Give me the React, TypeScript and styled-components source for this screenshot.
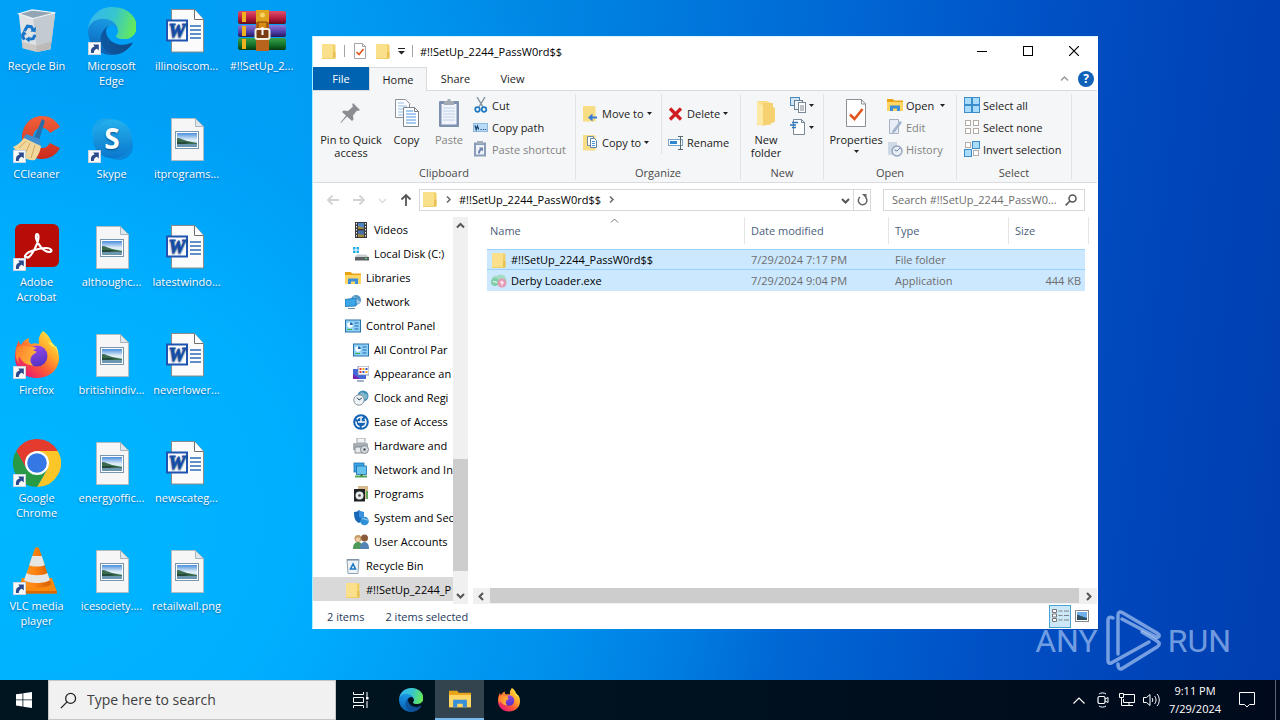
import React from "react";
import styled, { createGlobalStyle } from "styled-components";

const GlobalStyle = createGlobalStyle`
  *, *::before, *::after { box-sizing: border-box; }
  body { margin: 0; background: #0046b4; }
  body, button, input { font-family: "Open Sans", "Noto Sans", sans-serif; font-size: 11px; line-height: 15px; }
  button { border: 0; padding: 0; background: none; color: inherit; cursor: default; }
  svg { display: block; flex: none; }
`;

/* ---------- desktop icons ---------- */

type IconProps = { size?: number };

const ShortcutArrow = () => (
  <g>
    <rect x="0.5" y="35.500" width="12" height="12" fill="#f8fafc" stroke="#c9d6e2" />
    <path d="M3 46c-.6-3.500.8-5.800 3.600-6.400L5.200 37.500h5.600v6L9 41.800C7 42.300 5.700 43.800 5.800 46Z" fill="#2b4a8c" />
  </g>
);

const RecycleBinIcon = ({ size = 48 }: IconProps) => (
  <svg width={size} height={size} viewBox="0 0 50 50" aria-hidden="true">
    <path d="M6 7l15 5 23-6-5 38-14 3-15-4Z" fill="#dfe3e6" />
    <path d="M21 12 44 6l-5 38-14 3Z" fill="#c3cad0" />
    <path d="M6 7 20 3l24 3-23 6Z" fill="#93a5b3" stroke="#f3f7fa" strokeWidth="1.200" />
    <path d="M10 43l-1-7 16 4 15-4-1 8-14 3Z" fill="#b9a79c" opacity=".45" />
    <g fill="none" stroke="#1976c8" strokeWidth="3.200">
      <path d="M12 25l3-5 4 .5 2 3.500" />
      <path d="M23 29l-2 4-5 .5" />
      <path d="M12 34l-2-3 1-3" />
    </g>
    <path d="M18 25.500l5.500.500.500-5.500Z M17 30.500v6.500l-4-3.500Z M8 29.500l3-5 3.500 4Z" fill="#1976c8" />
  </svg>
);

const EdgeArt = () => (
  <>
    <defs>
      <linearGradient id="edgeDeep" x1="0" x2="1" y1="0" y2="0"><stop stopColor="#0c59a4" /><stop offset="1" stopColor="#114a8b" /></linearGradient>
      <linearGradient id="edgeMid" x1="0.500" x2="0.300" y1="0" y2="1"><stop stopColor="#1b9de2" /><stop offset=".45" stopColor="#1383d4" /><stop offset="1" stopColor="#0b5cab" /></linearGradient>
      <linearGradient id="edgeTop" x1="0" x2="1" y1="0.300" y2="0.500"><stop stopColor="#35b8f0" /><stop offset=".5" stopColor="#36c5d0" /><stop offset="1" stopColor="#66eb55" /></linearGradient>
    </defs>
    <path fill="url(#edgeDeep)" d="M231 190.500c-3.400 1.800-6.900 3.400-10.500 4.700-11.500 4.300-23.600 6.500-35.900 6.500-47.300 0-88.500-32.500-88.500-74.300.1-11.400 6.400-21.900 16.400-27.300-42.800 1.800-53.800 46.400-53.800 72.500 0 74 68.100 81.400 82.800 81.400 7.900 0 19.800-2.300 27-4.600l1.300-.4c27.600-9.500 51-28.100 66.600-52.800 1.200-1.900.6-4.300-1.200-5.500-1.300-.8-2.900-.9-4.200-.2z" />
    <path fill="url(#edgeMid)" d="M105.700 241.400c-8.900-5.500-16.600-12.800-22.700-21.300-26.300-36-18.400-86.500 17.600-112.800 3.800-2.700 7.700-5.200 11.900-7.200 3.100-1.500 8.400-4.100 15.500-4 10.100.1 19.600 4.900 25.700 13 4 5.400 6.300 11.900 6.400 18.700 0-.2 24.500-79.600-80-79.600-43.900 0-80 41.700-80 78.200-.2 19.300 4 38.500 12.100 56 27.600 58.800 94.800 87.600 156.400 67.100-21.100 6.600-44.100 3.700-62.900-8.100z" />
    <path fill="url(#edgeTop)" d="M152.300 148.900c-.9 1-3.300 2.500-3.300 5.800 0 2.700 1.700 5.300 4.800 7.500 14.900 10.300 43 9 43.100 9 11 0 21.900-3 31.400-8.600 19.600-11.400 31.600-32.400 31.600-55 .3-23.300-8.300-38.800-11.800-45.700C226.100 18.800 179.100 0 128 0 56.100 0 1 56.200 0 128c.5-36.500 36.800-66 80-66 3.500 0 23.500.3 42 10.100 16.300 8.600 24.900 18.900 30.800 29.200 6.200 10.700 7.300 24.100 7.300 29.500 0 5.300-2.700 13.300-7.800 18.100z" />
  </>
);

const EdgeIcon = () => (
  <svg width="48" height="48" viewBox="0 0 48 48" aria-hidden="true">
    <g transform="scale(.1875)"><EdgeArt /></g>
    <ShortcutArrow />
  </svg>
);

const WordIcon = () => (
  <svg width="48" height="48" viewBox="0 0 48 48" aria-hidden="true">
    <path d="M8.500 2.500h23l9 10v32.500h-32Z" fill="#fbfbfb" stroke="#8a8a8a" />
    <path d="M31.500 2.500v10h9" fill="#fff" stroke="#6f6f6f" />
    <path d="M27 19h11M27 23h11M27 27h11M27 31h11" stroke="#2b6cb8" strokeWidth="1.300" />
    <rect x="4" y="13.500" width="20" height="20" fill="#fff" stroke="#1f55b0" strokeWidth="2" />
    <text x="14" y="30" textAnchor="middle" fontFamily="Liberation Serif, serif" fontSize="19" fontWeight="700" fontStyle="italic" fill="#1a52ae" stroke="#1a52ae" strokeWidth=".8">W</text>
  </svg>
);

const PhotoIcon = () => (
  <svg width="48" height="48" viewBox="0 0 48 48" aria-hidden="true">
    <defs>
      <linearGradient id="photoSky" x2="0" y2="1"><stop stopColor="#4b8fdd" /><stop offset=".5" stopColor="#e4f1f8" /><stop offset="1" stopColor="#9fc3d8" /></linearGradient>
    </defs>
    <path d="M8.500 3.500h24l8 8v34h-32Z" fill="#f6f6f6" stroke="#b3bcc2" />
    <path d="M32.500 3.500v8h8Z" fill="#dde8ee" stroke="#a9b4bb" />
    <rect x="12.500" y="16.500" width="23" height="17" fill="#fff" stroke="#7896b0" />
    <rect x="14" y="18" width="20" height="14" fill="url(#photoSky)" />
    <path d="M14 23c4 0 6 2 10 3l10 2v2H14Z" fill="#3b6b4e" />
    <path d="M14 29h20v3H14Z" fill="#6d96b0" />
    <path d="M14 27h14l-6 2h-8Z" fill="#24493b" />
  </svg>
);

const ArchiveIcon = () => (
  <svg width="48" height="48" viewBox="0 0 48 48" aria-hidden="true">
    <defs>
      <linearGradient id="bookRed" x2="0" y2="1"><stop stopColor="#e0506a" /><stop offset=".6" stopColor="#b3193b" /><stop offset="1" stopColor="#5d0b1e" /></linearGradient>
      <linearGradient id="bookBlue" x2="0" y2="1"><stop stopColor="#8a78d8" /><stop offset=".6" stopColor="#4d3ca6" /><stop offset="1" stopColor="#221a55" /></linearGradient>
      <linearGradient id="bookGreen" x2="0" y2="1"><stop stopColor="#3ca04a" /><stop offset=".6" stopColor="#12702a" /><stop offset="1" stopColor="#06380f" /></linearGradient>
    </defs>
    <rect y="4" width="48" height="13" rx="2" fill="url(#bookRed)" />
    <rect y="18" width="48" height="12" rx="2" fill="url(#bookBlue)" />
    <rect y="31" width="48" height="12" rx="2" fill="url(#bookGreen)" />
    <path d="M4 5h4v10H4ZM4 19h4v10H4ZM4 32h4v10H4Z" fill="#efb21e" />
    <rect x="18" y="3" width="13" height="41" fill="#b8641c" />
    <path d="M18 3h13v12H18Z" fill="#e2a31d" />
    <circle cx="24.500" cy="8" r="2.500" fill="#f6d265" />
    <path d="M20 15h9v10h-9Z" fill="#d88a12" stroke="#7c430a" />
    <rect x="17.500" y="22" width="14" height="10" rx="2" fill="#7a3a12" stroke="#f4efe0" strokeWidth="2" />
    <path d="M24.500 20v8" stroke="#fff" strokeWidth="2" />
  </svg>
);

const CCleanerIcon = () => (
  <svg width="48" height="48" viewBox="0 0 48 48" aria-hidden="true">
    <defs><linearGradient id="ccRed" x2="0" y2="1"><stop stopColor="#f2603a" /><stop offset="1" stopColor="#c92a1e" /></linearGradient></defs>
    <path d="M47 12C42 4 36 1 29 1 17 1 9 11 9 23s8 21 20 21c8 0 14-4 18-11l-10-5c-2 3-4 5-8 5-6 0-9-4-9-10s3-10 9-10c4 0 6 2 8 5Z" fill="url(#ccRed)" />
    <path d="M29 4l3 2-6 19-5-2Z" fill="#2a6da8" />
    <path d="M13 19l14 5 1 8-18-8Z" fill="#3e8ed0" />
    <path d="M11 23 28 31c-1 7-4 11-6 14-7 1-14-2-22-13 5-2 8-5 11-9Z" fill="#f1d79c" />
    <path d="M13 26 6 33M17 28l-5 11M22 30l-4 13" stroke="#d1a85e" />
    <ShortcutArrow />
  </svg>
);

const SkypeIcon = () => (
  <svg width="48" height="48" viewBox="0 0 48 48" aria-hidden="true">
    <defs><linearGradient id="skypeBlue" x2="0" y2="1"><stop stopColor="#25b1ee" /><stop offset="1" stopColor="#0a76cc" /></linearGradient></defs>
    <circle cx="18" cy="17" r="14" fill="#1ba4ea" />
    <circle cx="31" cy="31" r="14" fill="#0c86d8" />
    <circle cx="24.500" cy="24" r="19.500" fill="url(#skypeBlue)" />
    <text x="24" y="34" textAnchor="middle" fontFamily="Open Sans, sans-serif" fontSize="28" fontWeight="700" fill="#fff">S</text>
    <ShortcutArrow />
  </svg>
);

const AcrobatIcon = () => (
  <svg width="48" height="48" viewBox="0 0 48 48" aria-hidden="true">
    <rect x="2" y="1" width="44" height="43" rx="6" fill="#b60d06" />
    <path d="M14 34c-3 1-3-2 2-5 5-2 11-4 17-4 6 0 7 4 3 4-5 0-12-8-13-14-.5-5 2.500-5 2.500-1 0 6-6 17-9.500 20-1 .7-1.500 1-2 0Z" fill="none" stroke="#fff" strokeWidth="2.200" strokeLinejoin="round" />
    <ShortcutArrow />
  </svg>
);

const FirefoxArt = () => (
  <>
    <defs>
      <linearGradient id="foxBody" x1=".9" x2=".2" y1=".1" y2=".9"><stop stopColor="#ffe640" /><stop offset=".35" stopColor="#ffa62c" /><stop offset=".65" stopColor="#ff5a36" /><stop offset="1" stopColor="#e81d6f" /></linearGradient>
      <linearGradient id="foxGlobe" x2="0.300" y2="1"><stop stopColor="#a04be8" /><stop offset="1" stopColor="#5a35c8" /></linearGradient>
      <linearGradient id="foxHead" x2="1" y2=".4"><stop stopColor="#ff7a2a" /><stop offset="1" stopColor="#ffb43a" /></linearGradient>
    </defs>
    <path d="M30 0c6 4 8 9 9 12 5 4 7 9 7 15 0 11-9 20-22 20S2 38 2 26c0-6 1-11 4-17 0 3 1 4 2 5 2-4 5-6 8-7-1 3 0 5 2 6 3-1 5-1 8 0-1-6 1-10 4-13Z" fill="url(#foxBody)" />
    <path d="M39 12c4 4 6 9 6 14 0-5 0-7-2-11-2 3-5 0-8-4Z" fill="#fff15a" />
    <circle cx="24" cy="25" r="10.500" fill="url(#foxGlobe)" />
    <path d="M4 16c4-2 8-2 13 0 3-.5 5 0 6.500 1.500-2 .5-3 1.300-3 2.200l3 .8c0 2-4 2.500-5 5-2 3-1 7 2 9-7 0-12-4-14-9-2 2-1 6 0 8-4-5-5-11-2.500-17.500Z" fill="url(#foxHead)" />
  </>
);

const FirefoxIcon = () => (
  <svg width="48" height="48" viewBox="0 0 48 48" aria-hidden="true"><FirefoxArt /><ShortcutArrow /></svg>
);

const ChromeIcon = () => (
  <svg width="48" height="48" viewBox="0 0 48 48" aria-hidden="true">
    <path d="M3.200 12A24 24 0 0 1 44.800 12H24L13.600 30Z" fill="#e33b2e" />
    <path d="M44.800 12A24 24 0 0 1 24 48L34.400 30 24 12Z" fill="#fcc629" />
    <path d="M3.200 12A24 24 0 0 0 24 48L34.400 30H13.600Z" fill="#289a45" />
    <circle cx="24" cy="24" r="12" fill="#fff" />
    <circle cx="24" cy="24" r="9.800" fill="#3578e5" />
    <ShortcutArrow />
  </svg>
);

const VlcIcon = () => (
  <svg width="48" height="48" viewBox="0 0 48 48" aria-hidden="true">
    <defs><linearGradient id="cone" x2="1"><stop stopColor="#ff9a2a" /><stop offset=".4" stopColor="#ff8412" /><stop offset="1" stopColor="#d65f00" /></linearGradient></defs>
    <path d="M9 31h30l5 14-1 1.500H5L4 45Z" fill="#f98a10" />
    <path d="M4 44h40v2.500H4Z" fill="#d86700" />
    <path d="M22 1c1-1 3-1 4 0l12 36c-3 5-25 5-28 0Z" fill="url(#cone)" />
    <path d="M19.200 9h9.600l3 9c-3 2-12.600 2-15.600 0ZM13.500 26c5 3 16 3 21 0l2.400 7c-4 4-21.800 4-25.800 0Z" fill="#e6e6e4" />
    <ShortcutArrow />
  </svg>
);

/* ---------- small icons ---------- */

const FolderIcon = ({ size = 16 }: IconProps) => (
  <svg width={size} height={size} viewBox="0 0 16 16" aria-hidden="true">
    <path d="M1 1h11l2.500 1v13L12 16H1Z" fill="#f3cf68" />
    <path d="M1 1h11v14H1Z" fill="#fbe08c" />
    <path d="M12 9h2.500v6.500H12Z" fill="#e9c052" />
  </svg>
);

const NewFolderIcon = () => (
  <svg width="24" height="32" viewBox="0 0 24 32" aria-hidden="true">
    <path d="M3 4h10l4 2v22H3Z" fill="#f9dc86" />
    <path d="M9 6h10v4l2 1v14l-12 4Z" fill="#f5d171" />
    <path d="M3 4l6 5v20l-6-2Z" fill="#fde9a4" />
  </svg>
);

const ExplorerIcon = ({ size = 16 }: IconProps) => (
  <svg width={size} height={size} viewBox="0 0 16 16" aria-hidden="true">
    <path d="M0 2h6l1 1.500h9V14H0Z" fill="#e8a317" />
    <path d="M0 5h16v9H0Z" fill="#ffd664" />
    <path d="M3 14V8.500h10V14h-3v-2.500H6V14Z" fill="#3b8ed8" />
  </svg>
);

const CheckPageIcon = ({ size = 16 }: IconProps) => (
  <svg width={size} height={size} viewBox="0 0 16 16" aria-hidden="true">
    <path d="M2.500.5h8l3 3v12h-11Z" fill="#fff" stroke="#8b8f94" strokeWidth=".8" />
    <path d="M10.500.5v3h3" fill="none" stroke="#8b8f94" strokeWidth=".8" />
    <path d="M4.500 9l2.500 2.500L11.500 6" fill="none" stroke="#e2571e" strokeWidth="1.600" />
  </svg>
);

const PropertiesIcon = () => (
  <svg width="24" height="32" viewBox="0 0 24 32" aria-hidden="true">
    <path d="M2.500 2.500h15l4 4.500v22.500h-19Z" fill="#fff" stroke="#8b9096" />
    <path d="M17.500 2.500V7h4" fill="none" stroke="#8b9096" />
    <path d="M6 17.500l4.500 4.500 8-10" fill="none" stroke="#e2571e" strokeWidth="2.600" />
  </svg>
);

const PinIcon = () => (
  <svg width="24" height="32" viewBox="0 0 24 32" aria-hidden="true">
    <path d="M14 6l7 7-2 1-1-.5-4 5 .5 4L13 24l-5-4.500L2 26l-.5-.5L7 18.500 3 15l1.500-1.500 4.500.5 5-4.500-.8-1.500Z" fill="#8a8d91" />
  </svg>
);

const CopyIcon = () => (
  <svg width="26" height="32" viewBox="0 0 26 32" aria-hidden="true">
    <path d="M1.500 2.500h10l4 4v14h-14Z" fill="#fff" stroke="#8a9198" />
    <path d="M4 9h9M4 12h9M4 15h9M4 18h6M4 6h6" stroke="#8dbbe6" />
    <path d="M9.500 10.500h11l4 4v15h-15Z" fill="#fff" stroke="#7d848b" />
    <path d="M20.500 10.500v4h4" fill="none" stroke="#7d848b" />
    <path d="M12 14h7M12 17h10M12 20h10M12 23h10M12 26h10" stroke="#4b97df" />
  </svg>
);

const PasteIcon = () => (
  <svg width="24" height="32" viewBox="0 0 24 32" aria-hidden="true">
    <rect x="2" y="4" width="20" height="26" rx="1" fill="#7d90ae" />
    <rect x="4.500" y="7" width="15" height="20.500" fill="#f1f5fb" />
    <path d="M6 11h12M6 14h12M6 17h12M6 20h12M6 23h12" stroke="#bfd2ea" />
    <path d="M7 4h3l1-2h2l1 2h3v4H7Z" fill="#a2aab6" />
  </svg>
);

const CutIcon = () => (
  <svg width="16" height="16" viewBox="0 0 16 16" aria-hidden="true">
    <path d="M4 0l6 10M12 0 6 10" stroke="#8593a0" strokeWidth="1.400" />
    <circle cx="4.500" cy="12.500" r="2.300" fill="none" stroke="#1d78c4" strokeWidth="1.700" />
    <circle cx="11" cy="12.500" r="2.300" fill="none" stroke="#1d78c4" strokeWidth="1.700" />
  </svg>
);

const CopyPathIcon = () => (
  <svg width="16" height="16" viewBox="0 0 16 16" aria-hidden="true">
    <rect x=".5" y="4.500" width="14" height="8" fill="#b9dcf8" stroke="#8fb9dc" />
    <path d="M2 6.500l1.200 4L4.500 7l1.200 3.500M7.500 10.500h1.200M10 10.500h1.200M12.300 10.500h1" fill="none" stroke="#17436f" strokeWidth="1.200" />
  </svg>
);

const PasteShortcutIcon = () => (
  <svg width="16" height="16" viewBox="0 0 16 16" aria-hidden="true">
    <rect x="1" y="1.500" width="12" height="14" fill="#8b9cb8" />
    <rect x="3" y="4" width="8" height="9.500" fill="#eef3fa" />
    <rect x="4" y="0" width="6" height="3" fill="#a4adba" />
    <path d="M5 12.500c0-3 1-4 2-4.500L6 6.500h4v4L8.800 9.300C7.500 10 7 11 7 12.500Z" fill="#6f86ac" />
  </svg>
);

const MoveToIcon = () => (
  <svg width="16" height="16" viewBox="0 0 16 16" aria-hidden="true">
    <path d="M0 0h11l1.500 1v14.500H0Z" fill="#f9dd84" />
    <path d="M14 12.500H9.500v3L5 11.500l4.500-4v3H14Z" fill="#3b79d6" />
  </svg>
);

const CopyToIcon = () => (
  <svg width="16" height="16" viewBox="0 0 16 16" aria-hidden="true">
    <path d="M0 0h11l1.500 1v14.500H0Z" fill="#f9dd84" />
    <path d="M4.500 1.500h6v9h-6Z" fill="#fff" stroke="#6c8aa8" />
    <path d="M7.500 3.500h4l2 2v7h-6Z" fill="#fff" stroke="#5b7fa6" />
    <path d="M9 6.500h3M9 8.500h3M9 10.500h3" stroke="#4b97df" />
  </svg>
);

const DeleteIcon = () => (
  <svg width="16" height="16" viewBox="0 0 16 16" aria-hidden="true">
    <path d="M2 2.500l11 11M13 2.500l-11 11" stroke="#cf1d22" strokeWidth="3.200" />
  </svg>
);

const RenameIcon = () => (
  <svg width="16" height="16" viewBox="0 0 16 16" aria-hidden="true">
    <rect x=".5" y="4.500" width="14" height="6" fill="#fff" stroke="#7aa3cc" />
    <rect x="2" y="6" width="7" height="3" fill="#2f87d2" />
    <path d="M10 1.500h5M12.500 1.500v13M10 14.500h5" stroke="#5d6875" fill="none" />
  </svg>
);

const NewItemIcon = () => (
  <svg width="16" height="16" viewBox="0 0 16 16" aria-hidden="true">
    <rect x=".5" y=".5" width="9" height="8" fill="#cfe6f8" stroke="#4f87b5" />
    <rect x="4.500" y="3.500" width="8" height="9" fill="#eef6fc" stroke="#6d7f8e" />
    <rect x="8.500" y="5.500" width="7" height="10" fill="#fff" stroke="#7a8794" />
    <path d="M10 9h4M10 11h4M10 13h4" stroke="#7a8794" />
  </svg>
);

const EasyAccessIcon = () => (
  <svg width="16" height="16" viewBox="0 0 16 16" aria-hidden="true">
    <path d="M3.500.5h8l3 3v12h-11Z" fill="#fff" stroke="#7a8794" />
    <path d="M11.500.5v3h3" fill="none" stroke="#7a8794" />
    <path d="M2 3.500h6M0 6h6M2 8.500h4" stroke="#2b77bd" strokeWidth="1.400" />
  </svg>
);

const EditIcon = () => (
  <svg width="16" height="16" viewBox="0 0 16 16" aria-hidden="true">
    <path d="M2.500.5h9v14h-9Z" fill="#e9eef6" stroke="#a5b2c6" />
    <path d="M13 2l2 1.500-7 9.500-3 2 .5-3.500Z" fill="#a3b3cc" />
  </svg>
);

const HistoryIcon = () => (
  <svg width="16" height="16" viewBox="0 0 16 16" aria-hidden="true">
    <path d="M1 1h9v13H1Z" fill="#d0d9e6" />
    <circle cx="10" cy="10" r="5" fill="#e9eef6" stroke="#93a3bc" strokeWidth="1.400" />
    <path d="M10 10l3-3M7.500 9l2.500 1" fill="none" stroke="#7084a3" />
  </svg>
);

const SelectIcon = ({ filled }: { filled: number[] }) => (
  <svg width="16" height="16" viewBox="0 0 16 16" aria-hidden="true">
    {[0, 1, 2, 3].map((i) => {
      const on = filled.includes(i);
      const x = i % 2 ? 8.5 : 0.5;
      const y = i > 1 ? 8.5 : 0.5;
      return on
        ? <rect key={i} x={x} y={y} width="7" height="7" fill="#a9dbfb" stroke="#3c8dc9" />
        : <rect key={i} x={x + 1} y={y + 1} width="5" height="5" fill="#fff" stroke="#b5aca8" />;
    })}
  </svg>
);

const Caret = () => (
  <svg width="5" height="3" viewBox="0 0 5 3" aria-hidden="true"><path d="M0 0h5L2.500 3Z" fill="#222" /></svg>
);

const Chevron = ({ turn, color = "#555", width = 2 }: { turn: "up" | "down" | "left" | "right"; color?: string; width?: number }) => {
  const paths = { up: "M1 6.500 4.500 3 8 6.500", down: "M1 3l3.500 3.500L8 3", left: "M6 1 2.500 4.500 6 8", right: "M3 1l3.500 3.500L3 8" };
  return <svg width="9" height="9" viewBox="0 0 9 9" aria-hidden="true"><path d={paths[turn]} fill="none" stroke={color} strokeWidth={width} /></svg>;
};

const CrumbChevron = () => (
  <svg width="9" height="9" viewBox="0 0 9 9" aria-hidden="true"><path d="M3 1.500l3 3-3 3" fill="none" stroke="#666" strokeWidth="1.500" /></svg>
);

const ArrowIcon = ({ d, color }: { d: string; color: string }) => (
  <svg width="14" height="14" viewBox="0 0 14 14" aria-hidden="true"><path d={d} fill="none" stroke={color} strokeWidth="1.800" /></svg>
);

const SearchIcon = ({ size = 12, color = "#555", stroke = 1.5 }: { size?: number; color?: string; stroke?: number }) => (
  <svg width={size} height={size} viewBox="0 0 12 12" aria-hidden="true">
    <circle cx="7.500" cy="4.500" r="3.500" fill="none" stroke={color} strokeWidth={stroke} />
    <path d="M5 7 .6 11.400" stroke={color} strokeWidth={stroke} />
  </svg>
);

const treeArt: Record<string, React.ReactNode> = {
  video: <><rect x="2" width="12" height="16" fill="#3b3b3d" /><rect x="5" y="1" width="6" height="6" fill="#4a86c8" /><rect x="5" y="8.500" width="6" height="6.500" fill="#4a6ea8" /><path d="M5 4l6 2v1H5ZM5 12l6 1v2H5Z" fill="#a58a35" /><path d="M3.500 1v14M12.500 1v14" stroke="#eee" strokeDasharray="1.500 1.500" /></>,
  disk: <><path d="M0 1h2.500v2.500H0ZM3.500 1H6v2.500H3.500ZM0 4.500h2.500V7H0ZM3.500 4.500H6V7H3.500Z" fill="#1fb0e6" /><path d="M4 8.500h9l3 2.500H2Z" fill="#c8ced2" /><rect x="2" y="11" width="14" height="3.500" fill="#5b6266" /><rect x="12" y="12" width="2" height="1" fill="#57e06a" /></>,
  network: <><circle cx="11" cy="6" r="5" fill="#4f95c6" /><path d="M8 3c2-1 3 0 4 2s3 1 3 3-3 2-4 1Z" fill="#9fcbe6" /><path d="M0 5.500 11 4v8L0 12.500Z" fill="#3aa6e8" stroke="#1c6fae" strokeWidth=".8" /><path d="M3 14.500h7" stroke="#6c8aa1" /></>,
  control: <><rect x=".5" y="2" width="15" height="12" fill="#8fd0f6" stroke="#2a72aa" /><circle cx="5" cy="7" r="2.800" fill="#fff" /><path d="M5 4.200V7h2.800A2.800 2.800 0 0 0 5 4.200" fill="#1c69b0" /><path d="M9.500 5h4M9.500 8h4M9.500 11h4" stroke="#1c69b0" /><path d="M2 11.500h5" stroke="#3cb25c" /></>,
  appearance: <><rect y="3" width="13" height="10" fill="#4568d8" /><path d="M0 8l7 5H0Z" fill="#7b24b0" /><rect x="5" width="11" height="9" fill="#fff" stroke="#6678a8" strokeWidth=".8" /><path d="M6.500 2h2v2h-2Z M6.500 5h2v2h-2Z" fill="#e03c2e" /><path d="M9.500 2h2v2h-2Z M12.500 5h2v2h-2Z" fill="#f1a81d" /><path d="M12.500 2h2v2h-2Z M9.500 5h2v2h-2Z" fill="#3b55c8" /><path d="M4 15h7" stroke="#8899b5" strokeWidth="1.500" /></>,
  clock: <><circle cx="10" cy="6" r="5.500" fill="#3d8db8" /><path d="M7 3c3-2 4 1 6 1s2 4 0 5-5-1-6-6" fill="#7fb8c8" /><circle cx="6" cy="10" r="5.200" fill="#edf2f5" stroke="#8b979f" /><path d="M6 10 4 7.500M6 10l3-2" stroke="#354b5c" /></>,
  ease: <><circle cx="8" cy="8" r="7.800" fill="#1463b5" /><circle cx="8" cy="8" r="5" fill="none" stroke="#fff" strokeWidth="1.400" strokeDasharray="7 2" /><path d="M8 4v4h4.500M5 8h3" fill="none" stroke="#fff" strokeWidth="1.400" /></>,
  hardware: <><path d="M4 0h8v5H4Z" fill="#f1f3f4" stroke="#8a9298" strokeWidth=".8" /><rect y="5" width="15" height="7" rx="1" fill="#a9b0b5" /><path d="M2 9h7v6H2Z" fill="#e8ebed" stroke="#6f777d" strokeWidth=".8" /><circle cx="11.500" cy="11.500" r="4" fill="#d5dade" stroke="#7e878d" /><circle cx="11.500" cy="11.500" r="1.200" fill="#4c5358" /></>,
  internet: <><rect x="1" y="1" width="10" height="9" fill="#3aa6e8" stroke="#1c6fae" strokeWidth=".8" /><rect x="3.500" y="4" width="10" height="8.500" fill="#67c4ef" stroke="#1c6fae" strokeWidth=".8" /><path d="M2 14.500h12" stroke="#4fa857" strokeWidth="2" /><path d="M8.500 12v2.500" stroke="#41713f" strokeWidth="2" /></>,
  programs: <><rect x="5" width="10" height="13" fill="#d7b98c" /><rect x="1" y="3" width="11" height="12.500" fill="#1f2324" /><circle cx="6.500" cy="9.500" r="4" fill="#e7e9ea" /><circle cx="6.500" cy="9.500" r="1.300" fill="#444" /><path d="M13 5h2v8h-2Z" fill="#63a55c" /></>,
  security: <><path d="M1 2c3 0 4-1 5-2 1 1 2 2 5 2 0 6-1 9-5 11C2 11 1 8 1 2Z" fill="#1a67b6" /><path d="M6 0c1 1 2 2 5 2 0 3 0 5-1 7L6 7Z" fill="#3a93de" /><circle cx="11.500" cy="11" r="4.300" fill="#2d8fd8" /><path d="M9 9c2-1 4 1 6 1" stroke="#a8d8f5" fill="none" /></>,
  users: <><circle cx="5" cy="4.500" r="3.500" fill="#c79a63" /><path d="M0 15c0-5 2-7 5-7s5 2 5 7Z" fill="#4f9a58" /><circle cx="11.500" cy="4" r="3.500" fill="#8b5a38" /><path d="M7 15c0-5 2-7 4.500-7S16 10 16 15Z" fill="#5682b4" /><circle cx="5" cy="5.500" r="2.200" fill="#f0cfa5" /></>,
  bin: <><path d="M2 1.500h12L13 15.500H3Z" fill="#eef3f7" stroke="#91a2af" /><path d="M2 2h12" stroke="#71879a" /><path d="M8 6l-2.500 5h5Z" fill="none" stroke="#1d78c4" strokeWidth="1.600" /></>,
};

const TreeIcon = ({ kind }: { kind: string }) => {
  if (kind === "folder") return <FolderIcon />;
  if (kind === "libraries") return <ExplorerIcon />;
  return <svg width="16" height="16" viewBox="0 0 16 16" aria-hidden="true">{treeArt[kind]}</svg>;
};

const LoaderIcon = () => (
  <svg width="16" height="16" viewBox="0 0 16 16" aria-hidden="true">
    <path d="M1 6c0-3 3-4 5-3 2-2 6-1 8 0l2 5H1Z" fill="#a3dcc2" />
    <circle cx="4" cy="9" r="4" fill="#7fcfab" />
    <circle cx="11" cy="10" r="4.500" fill="#e59ab4" />
    <path d="M2 8.500l4 1M9 9l4 1M11 7.500v5" stroke="#fff" />
  </svg>
);

/* ---------- desktop ---------- */

const Screen = styled.div`
  display: flex;
  flex-direction: column;
  min-height: 100vh;
  background:
    radial-gradient(ellipse 62% 95% at 0% 72%, #00b6ff 0%, #00b0ff 36%, rgba(0, 160, 248, 0.7) 62%, rgba(0, 130, 230, 0) 100%),
    linear-gradient(96deg, #00a2f6 0%, #009cf2 22%, #0084e2 42%, #0068d4 62%, #0050c4 78%, #0044b8 90%, #003eb0 100%);
`;

const Desktop = styled.main`
  position: relative;
  flex: 1;
  min-height: 660px;
`;

const ShortcutGrid = styled.div`
  display: grid;
  grid-auto-flow: column;
  grid-template-rows: repeat(6, 108px);
  grid-auto-columns: 75px;
  justify-content: start;
  margin-left: -1px;
`;

const Shortcut = styled.button`
  display: flex;
  flex-direction: column;
  align-items: center;
  gap: 3px;
  padding-top: 7px;
  color: #fff;
  text-shadow: 0 1px 2px rgba(0, 40, 90, 0.6);
`;

const ShortcutLabel = styled.span`
  max-width: 75px;
  white-space: pre-line;
  text-align: center;
`;

const Watermark = styled.div`
  position: absolute;
  right: 49px;
  bottom: 8px;
  z-index: 3;
  display: flex;
  align-items: center;
  gap: 7px;
  color: rgba(190, 214, 250, 0.62);
  font: 32px/62px Roboto, "Liberation Sans", sans-serif;
  pointer-events: none;
`;

/* ---------- explorer window ---------- */

const Window = styled.section`
  position: absolute;
  inset: 36px 182px 51px 312px;
  z-index: 2;
  display: flex;
  flex-direction: column;
  border: 1px solid #fff;
  border-color: #d8f6ff #fff #fff #a8ecff;
  background: #fff;
  color: #1c1c1c;
  overflow: hidden;
`;

const TitleBar = styled.header`
  display: flex;
  align-items: center;
  height: 30px;
  padding: 0 0 2px 8px;
  flex: none;
`;

const QuickAccess = styled.div`
  display: flex;
  align-items: center;
  gap: 7px;
  margin-right: 7px;
`;

const Divider = styled.span`
  width: 1px;
  height: 12px;
  background: #a5a5a5;
`;

const ColumnRule = styled.span`
  width: 1px;
  height: 60px;
  margin-right: 3px;
  background: #e1e3e5;
`;

const WindowTitle = styled.h1`
  flex: 1;
  margin: 0;
  font-size: 11px;
  font-weight: 400;
  color: #000;
`;

const CaptionButton = styled.button`
  display: grid;
  place-items: center;
  width: 46px;
  height: 28px;
`;

const Tabs = styled.nav`
  display: flex;
  align-items: stretch;
  height: 24px;
  flex: none;
  border-bottom: 1px solid #dadbdc;
`;

const Tab = styled.button<{ $kind?: "file" | "active" }>`
  width: 57px;
  ${(p) => p.$kind === "file" && "width: 56px; background: #0063b1; color: #fff;"}
  ${(p) => p.$kind === "active" && "width: 58px; margin-bottom: -1px; background: #f5f6f7; border: 1px solid #dadbdc; border-bottom: 0;"}
`;

const TabTools = styled.div`
  display: flex;
  align-items: center;
  gap: 9px;
  margin-left: auto;
  padding-right: 3px;
`;

const HelpButton = styled.button`
  width: 16px;
  height: 16px;
  border-radius: 50%;
  background: #0f62b8;
  color: #fff;
  font-size: 12px;
  font-weight: 700;
`;

const Ribbon = styled.div`
  display: flex;
  height: 92px;
  flex: none;
  background: #f5f6f7;
  border-bottom: 1px solid #dadbdc;
`;

const RibbonGroup = styled.section<{ $width: number }>`
  display: flex;
  flex-direction: column;
  flex: none;
  width: ${(p) => p.$width}px;
  margin: 3px 0 2px;
  border-right: 1px solid #e1e3e5;
`;

const GroupBody = styled.div`
  display: flex;
  flex: 1;
  padding-left: 4px;
`;

const GroupName = styled.h2`
  margin: 0;
  text-align: center;
  font-size: 11px;
  font-weight: 400;
  line-height: 15px;
  color: #4a4a4a;
`;

const BigButton = styled.button<{ $width: number; $muted?: boolean }>`
  display: flex;
  flex-direction: column;
  align-items: center;
  gap: 4px;
  width: ${(p) => p.$width}px;
  padding-top: 3px;
  line-height: 13px;
  white-space: pre-line;
  color: ${(p) => (p.$muted ? "#838383" : "#222")};
`;

const Stack = styled.div<{ $width?: number; $spread?: boolean }>`
  display: flex;
  flex-direction: column;
  ${(p) => p.$width && `width: ${p.$width}px;`}
  padding: ${(p) => (p.$spread ? "5px 0 0 3px" : "0 0 0 3px")};
`;

const SmallButton = styled.button<{ $muted?: boolean; $tall?: boolean }>`
  display: flex;
  align-items: center;
  gap: 3px;
  height: ${(p) => (p.$tall ? 29 : 22)}px;
  white-space: nowrap;
  color: ${(p) => (p.$muted ? "#838383" : "#222")};
`;

const AddressRow = styled.div`
  display: flex;
  align-items: center;
  height: 34px;
  flex: none;
  padding: 0 12px 0 13px;
`;

const NavArrows = styled.div`
  display: flex;
  align-items: center;
  gap: 12px;
  padding-right: 6px;
`;

const AddressBox = styled.div`
  display: flex;
  align-items: center;
  flex: 1;
  height: 22px;
  border: 1px solid #d9d9d9;
  color: #000;
`;

const Crumbs = styled.div`
  display: flex;
  align-items: center;
  gap: 6px;
  flex: 1;
  padding: 0 0 2px 2px;
`;

const RefreshButton = styled.button`
  display: grid;
  place-items: center;
  width: 17px;
  height: 20px;
  margin-left: 3px;
  border-left: 1px solid #d9d9d9;
`;

const SearchBox = styled.label`
  display: flex;
  align-items: center;
  width: 202px;
  height: 22px;
  margin-left: 12px;
  padding: 0 7px 0 8px;
  border: 1px solid #d9d9d9;
`;

const TextInput = styled.input<{ $large?: boolean }>`
  flex: 1;
  min-width: 0;
  padding: 0;
  border: 0;
  outline: 0;
  background: transparent;
  text-overflow: ellipsis;
  font-size: ${(p) => (p.$large ? 14 : 11)}px;
  line-height: 20px;
  &::placeholder { color: ${(p) => (p.$large ? "#404040" : "#6d6d6d")}; opacity: 1; }
`;

const Panes = styled.div`
  display: flex;
  flex: 1;
  min-height: 0;
`;

const NavPane = styled.aside`
  display: flex;
  width: 155px;
  flex: none;
`;

const Tree = styled.ul`
  flex: 1;
  min-width: 0;
  margin: 0;
  padding: 0;
  list-style: none;
  overflow: hidden;
`;

const TreeItem = styled.li<{ $depth: number; $selected?: boolean }>`
  display: flex;
  align-items: center;
  gap: 5px;
  height: 24px;
  padding: 1px 0 0 ${(p) => 24 + p.$depth * 8}px;
  white-space: nowrap;
  color: #000;
  background: ${(p) => (p.$selected ? "#d9d9d9" : "transparent")};
`;

const ScrollTrack = styled.div<{ $across?: boolean }>`
  display: flex;
  flex: none;
  flex-direction: ${(p) => (p.$across ? "row" : "column")};
  ${(p) => (p.$across ? "height: 16px; padding: 0 1px;" : "width: 15px;")}
  background: #f0f0f0;
`;

const ScrollButton = styled.button`
  display: grid;
  place-items: center;
  width: 15px;
  height: 17px;
`;

const ScrollThumb = styled.div<{ $across?: boolean }>`
  background: #cdcdcd;
  ${(p) => (p.$across ? "flex: 1; margin: 0 2px 0 1px; height: 15px;" : "height: 112px; margin: auto 0 16px;")}
`;

const ListPane = styled.div`
  display: flex;
  flex-direction: column;
  flex: 1;
  min-width: 0;
  padding-left: 5px;
`;

const ListArea = styled.div`
  flex: 1;
  padding: 0 8px 0 14px;
`;

const FileTable = styled.table`
  width: 100%;
  table-layout: fixed;
  border-collapse: separate;
  border-spacing: 0;
  color: #6d6d6d;
`;

const HeadCell = styled.th`
  height: 27px;
  padding: 0 0 1px 6px;
  border-right: 1px solid #e5e5e5;
  text-align: left;
  font-weight: 400;
  color: #4c607a;
  &:first-child { padding-left: 3px; }
`;

const SortMark = styled.span`
  position: absolute;
  top: 179px;
  left: 297px;
`;

const HeadGap = styled.tr`
  height: 5px;
`;

const FileRow = styled.tr`
  height: 21px;
`;

const Cell = styled.td<{ $end?: boolean; $focused?: boolean }>`
  padding: 0 4px 0 6px;
  text-align: ${(p) => (p.$end ? "right" : "left")};
  background: #cce8ff;
  border: 0 solid #99d1ff;
  border-width: ${(p) => (p.$focused ? "1px 0" : "0")};
  &:first-child { padding-left: 4px; color: #000; }
`;

const FileName = styled.span`
  display: flex;
  align-items: center;
  gap: 4px;
`;

const StatusBar = styled.footer`
  display: flex;
  align-items: center;
  gap: 21px;
  height: 24px;
  flex: none;
  padding: 0 8px 0 14px;
  color: #26395b;
`;

const ViewButtons = styled.div`
  display: flex;
  align-items: center;
  gap: 4px;
  margin-left: auto;
`;

const ViewButton = styled.button<{ $active?: boolean }>`
  display: grid;
  place-items: center;
  height: 23px;
  ${(p) => p.$active && "width: 22px; background: #cce8f6; border: 1px solid #4ba3cf;"}
`;

/* ---------- taskbar ---------- */

const Taskbar = styled.footer`
  display: flex;
  align-items: stretch;
  height: 40px;
  background: linear-gradient(90deg, #00151f 0%, #001320 45%, #000a1c 100%);
  color: #fff;
`;

const TaskButton = styled.button<{ $active?: boolean; $wide?: number }>`
  display: grid;
  place-items: center;
  width: ${(p) => p.$wide ?? 49}px;
  ${(p) => p.$active && "background: #33444e; border-bottom: 2px solid #76b9ed;"}
`;

const TaskSearch = styled.label`
  display: flex;
  align-items: center;
  gap: 10px;
  width: 288px;
  padding: 0 11px;
  background: #f1f1f1;
  border: 1px solid #c4c8ca;
`;

const Tray = styled.div`
  display: flex;
  align-items: center;
  margin-left: auto;
`;

const TrayButton = styled.button<{ $wide?: boolean }>`
  display: grid;
  place-items: center;
  width: ${(p) => (p.$wide ? 40 : 24)}px;
  height: 40px;
`;

const Clock = styled.time`
  width: 64px;
  text-align: center;
  line-height: 18px;
`;

const ShowDesktop = styled.button`
  width: 5px;
  height: 40px;
  margin-left: 8px;
  border-left: 1px solid #5b6674;
`;

const shortcuts: [string, () => React.ReactElement][] = [
  ["Recycle Bin", () => <RecycleBinIcon />],
  ["CCleaner", CCleanerIcon],
  ["Adobe\nAcrobat", AcrobatIcon],
  ["Firefox", FirefoxIcon],
  ["Google\nChrome", ChromeIcon],
  ["VLC media\nplayer", VlcIcon],
  ["Microsoft\nEdge", EdgeIcon],
  ["Skype", SkypeIcon],
  ["althoughc...", PhotoIcon],
  ["britishindiv...", PhotoIcon],
  ["energyoffic...", PhotoIcon],
  ["icesociety....", PhotoIcon],
  ["illinoiscom...", WordIcon],
  ["itprograms...", PhotoIcon],
  ["latestwindo...", WordIcon],
  ["neverlower...", WordIcon],
  ["newscateg...", WordIcon],
  ["retailwall.png", PhotoIcon],
  ["#!!SetUp_2...", ArchiveIcon],
];

const tree: [string, string, number][] = [
  ["Videos", "video", 2],
  ["Local Disk (C:)", "disk", 2],
  ["Libraries", "libraries", 1],
  ["Network", "network", 1],
  ["Control Panel", "control", 1],
  ["All Control Par", "control", 2],
  ["Appearance an", "appearance", 2],
  ["Clock and Regi", "clock", 2],
  ["Ease of Access", "ease", 2],
  ["Hardware and", "hardware", 2],
  ["Network and In", "internet", 2],
  ["Programs", "programs", 2],
  ["System and Sec", "security", 2],
  ["User Accounts", "users", 2],
  ["Recycle Bin", "bin", 1],
  ["#!!SetUp_2244_P", "folder", 1],
];

const folderName = "#!!SetUp_2244_PassW0rd$$";

const RibbonBar = () => (
  <Ribbon>
    <RibbonGroup $width={263}>
      <GroupBody>
        <BigButton $width={68}><PinIcon />{"Pin to Quick\naccess"}</BigButton>
        <BigButton $width={43}><CopyIcon />Copy</BigButton>
        <BigButton $width={42} $muted><PasteIcon />Paste</BigButton>
        <Stack>
          <SmallButton><CutIcon />Cut</SmallButton>
          <SmallButton><CopyPathIcon />Copy path</SmallButton>
          <SmallButton $muted><PasteShortcutIcon />Paste shortcut</SmallButton>
        </Stack>
      </GroupBody>
      <GroupName>Clipboard</GroupName>
    </RibbonGroup>
    <RibbonGroup $width={165}>
      <GroupBody>
        <Stack $spread $width={81}>
          <SmallButton $tall><MoveToIcon />Move to <Caret /></SmallButton>
          <SmallButton $tall><CopyToIcon />Copy to <Caret /></SmallButton>
        </Stack>
        <ColumnRule />
        <Stack $spread>
          <SmallButton $tall><DeleteIcon />Delete <Caret /></SmallButton>
          <SmallButton $tall><RenameIcon />Rename</SmallButton>
        </Stack>
      </GroupBody>
      <GroupName>Organize</GroupName>
    </RibbonGroup>
    <RibbonGroup $width={83}>
      <GroupBody>
        <BigButton $width={42}><NewFolderIcon />{"New\nfolder"}</BigButton>
        <Stack>
          <SmallButton aria-label="New item"><NewItemIcon /><Caret /></SmallButton>
          <SmallButton aria-label="Easy access"><EasyAccessIcon /><Caret /></SmallButton>
        </Stack>
      </GroupBody>
      <GroupName>New</GroupName>
    </RibbonGroup>
    <RibbonGroup $width={133}>
      <GroupBody>
        <BigButton $width={56}><PropertiesIcon />Properties<Caret /></BigButton>
        <Stack>
          <SmallButton><ExplorerIcon />Open&nbsp;<Caret /></SmallButton>
          <SmallButton $muted><EditIcon />Edit</SmallButton>
          <SmallButton $muted><HistoryIcon />History</SmallButton>
        </Stack>
      </GroupBody>
      <GroupName>Open</GroupName>
    </RibbonGroup>
    <RibbonGroup $width={115}>
      <GroupBody>
        <Stack>
          <SmallButton><SelectIcon filled={[0, 1, 2, 3]} />Select all</SmallButton>
          <SmallButton><SelectIcon filled={[]} />Select none</SmallButton>
          <SmallButton><SelectIcon filled={[1, 2]} />Invert selection</SmallButton>
        </Stack>
      </GroupBody>
      <GroupName>Select</GroupName>
    </RibbonGroup>
  </Ribbon>
);

const Explorer = () => (
  <Window aria-label={folderName}>
    <TitleBar>
      <QuickAccess>
        <FolderIcon />
        <Divider />
        <CheckPageIcon />
        <FolderIcon />
        <svg width="7" height="7" viewBox="0 0 7 7" aria-hidden="true"><path d="M0 .5h7" stroke="#222" /><path d="M0 3h7L3.500 6.500Z" fill="#222" /></svg>
        <Divider />
      </QuickAccess>
      <WindowTitle>{folderName}</WindowTitle>
      <CaptionButton aria-label="Minimize"><svg width="10" height="10"><path d="M0 5.500h10" stroke="#000" /></svg></CaptionButton>
      <CaptionButton aria-label="Maximize"><svg width="10" height="10"><rect x=".5" y=".5" width="9" height="9" fill="none" stroke="#000" /></svg></CaptionButton>
      <CaptionButton aria-label="Close"><svg width="10" height="10"><path d="M0 0l10 10M10 0 0 10" stroke="#000" strokeWidth="1.200" /></svg></CaptionButton>
    </TitleBar>
    <Tabs>
      <Tab $kind="file">File</Tab>
      <Tab $kind="active">Home</Tab>
      <Tab>Share</Tab>
      <Tab>View</Tab>
      <TabTools>
        <Chevron turn="up" color="#9a9a9a" width={1.5} />
        <HelpButton aria-label="Help">?</HelpButton>
      </TabTools>
    </Tabs>
    <RibbonBar />
    <AddressRow>
      <NavArrows>
        <ArrowIcon d="M13 7H2M6.500 2.500 2 7l4.500 4.500" color="#d2d2d2" />
        <ArrowIcon d="M1 7h11M7.500 2.500 12 7l-4.500 4.500" color="#d2d2d2" />
        <Chevron turn="down" color="#dcdcdc" width={1.5} />
        <ArrowIcon d="M7 13V2M2.500 6.500 7 2l4.500 4.500" color="#555" />
      </NavArrows>
      <AddressBox>
        <Crumbs>
          <FolderIcon />
          <CrumbChevron />
          <span>{folderName}</span>
          <CrumbChevron />
        </Crumbs>
        <Chevron turn="down" />
        <RefreshButton aria-label="Refresh">
          <svg width="11" height="12" viewBox="0 0 11 12"><path d="M8.500 3.200A4.300 4.300 0 1 1 3 3" fill="none" stroke="#666" strokeWidth="1.500" /><path d="M5 0h4.500v5Z" fill="#666" /></svg>
        </RefreshButton>
      </AddressBox>
      <SearchBox>
        <TextInput type="text" aria-label="Search folder" placeholder="Search #!!SetUp_2244_PassW0..." />
        <SearchIcon />
      </SearchBox>
    </AddressRow>
    <Panes>
      <NavPane>
        <Tree>
          {tree.map(([name, kind, depth]) => (
            <TreeItem key={name} $depth={depth} $selected={kind === "folder"}>
              <TreeIcon kind={kind} />
              {name}
            </TreeItem>
          ))}
        </Tree>
        <ScrollTrack>
          <ScrollButton aria-label="Scroll up"><Chevron turn="up" /></ScrollButton>
          <ScrollThumb />
          <ScrollButton aria-label="Scroll down"><Chevron turn="down" /></ScrollButton>
        </ScrollTrack>
      </NavPane>
      <ListPane>
        <ListArea>
          <FileTable>
            <colgroup>
              <col />
              <col width="144" />
              <col width="120" />
              <col width="76" />
              <col width="4" />
            </colgroup>
            <thead>
              <tr>
                <HeadCell>Name<SortMark><Chevron turn="up" color="#777" width={1} /></SortMark></HeadCell>
                <HeadCell>Date modified</HeadCell>
                <HeadCell>Type</HeadCell>
                <HeadCell colSpan={2}>Size</HeadCell>
              </tr>
            </thead>
            <tbody>
              <HeadGap aria-hidden="true"><td /></HeadGap>
              <FileRow>
                <Cell $focused><FileName><FolderIcon />{folderName}</FileName></Cell>
                <Cell $focused>7/29/2024 7:17 PM</Cell>
                <Cell $focused>File folder</Cell>
                <Cell $focused $end />
              </FileRow>
              <FileRow>
                <Cell><FileName><LoaderIcon />Derby Loader.exe</FileName></Cell>
                <Cell>7/29/2024 9:04 PM</Cell>
                <Cell>Application</Cell>
                <Cell $end>444 KB</Cell>
              </FileRow>
            </tbody>
          </FileTable>
        </ListArea>
        <ScrollTrack $across>
          <ScrollButton aria-label="Scroll left"><Chevron turn="left" /></ScrollButton>
          <ScrollThumb $across />
          <ScrollButton aria-label="Scroll right"><Chevron turn="right" /></ScrollButton>
        </ScrollTrack>
      </ListPane>
    </Panes>
    <StatusBar>
      <span>2 items</span>
      <span>2 items selected</span>
      <ViewButtons>
        <ViewButton $active aria-label="Details view">
          <svg width="17" height="14" viewBox="0 0 17 14"><path d="M.5.5h4v3h-4ZM.5 5h4v3h-4ZM.5 9.500h4v3h-4Z" fill="#fff" stroke="#777" /><path d="M6.500 2h4M6.500 6.500h4M6.500 11h4M12 2h5M12 6.500h5M12 11h5" stroke="#7b8288" /></svg>
        </ViewButton>
        <ViewButton aria-label="Large icons view">
          <svg width="14" height="12" viewBox="0 0 14 12"><rect x=".5" y=".5" width="13" height="11" fill="#fff" stroke="#888" /><rect x="2" y="2" width="10" height="8" fill="#6fb0ea" /><path d="M2 5c3 0 5 2 10 3v2H2Z" fill="#2f4f63" /></svg>
        </ViewButton>
      </ViewButtons>
    </StatusBar>
  </Window>
);

export default function App() {
  return (
    <Screen>
      <GlobalStyle />
      <Desktop>
        <ShortcutGrid>
          {shortcuts.map(([label, Icon]) => (
            <Shortcut key={label}>
              <Icon />
              <ShortcutLabel>{label}</ShortcutLabel>
            </Shortcut>
          ))}
        </ShortcutGrid>
        <Explorer />
        <Watermark>
          <span>ANY</span>
          <svg width="56" height="62" viewBox="0 0 56 62" aria-hidden="true">
            <g fill="none" stroke="currentColor" strokeWidth="3.500" strokeLinejoin="round" strokeLinecap="round">
              <path d="M8 8C4 6 3 8 3 11v39c0 4 2 4 5 2l36-20" />
              <path d="M13 44V5c0-3 2-4 5-2l34 20c3 2 3 5-1 4L17 9" />
              <path d="M13 54c0 5 2 6 5 4l34-21c3-2 3-4 0-6L37 22" />
            </g>
          </svg>
          <span>RUN</span>
        </Watermark>
      </Desktop>
      <Taskbar>
        <TaskButton $wide={48} aria-label="Start">
          <svg width="16" height="16" viewBox="0 0 16 16"><path d="M0 2.300 6.500 1.400v6.100H0ZM7.300 1.300 16 0v7.500H7.300ZM0 8.300h6.500v6.200L0 13.600ZM7.300 8.300H16V16l-8.700-1.300Z" fill="#fff" /></svg>
        </TaskButton>
        <TaskSearch>
          <SearchIcon size={17} color="#222" stroke={0.9} />
          <TextInput $large type="text" aria-label="Type here to search" placeholder="Type here to search" />
        </TaskSearch>
        <TaskButton $wide={50} aria-label="Task view">
          <svg width="16" height="16" viewBox="0 0 16 16"><path d="M.5 0v2.500h10V0M.5 5.500h10v5H.5ZM.5 16v-2.500h10V16M14 0v5M14 9v7" fill="none" stroke="#fff" /><rect x="13" y="5" width="2.500" height="2.500" fill="#fff" /></svg>
        </TaskButton>
        <TaskButton aria-label="Microsoft Edge">
          <svg width="24" height="24" viewBox="0 0 256 256"><EdgeArt /></svg>
        </TaskButton>
        <TaskButton $active aria-label="File Explorer"><ExplorerIcon size={22} /></TaskButton>
        <TaskButton aria-label="Firefox">
          <svg width="24" height="24" viewBox="0 0 48 48"><FirefoxArt /></svg>
        </TaskButton>
        <Tray>
          <TrayButton aria-label="Show hidden icons">
            <svg width="12" height="7" viewBox="0 0 12 7"><path d="M.5 6.500 6 1l5.500 5.500" fill="none" stroke="#fff" strokeWidth="1.200" /></svg>
          </TrayButton>
          <TrayButton aria-label="Meet now">
            <svg width="14" height="16" viewBox="0 0 14 16"><rect x="2" y="4.500" width="7" height="7" rx="1.500" fill="none" stroke="#fff" strokeWidth="1.200" /><path d="M9 7l3-1.500v5L9 9M3 2c2-1.500 5-1.500 7 0M3 14c2 1.500 5 1.500 7 0" fill="none" stroke="#fff" /></svg>
          </TrayButton>
          <TrayButton aria-label="Network">
            <svg width="16" height="14" viewBox="0 0 16 14"><path d="M5 1.500h10.500v8H4.500V6M10 9.500v3M6 12.500h8M.5.500h4v4h-4ZM2.500 4.500v8h4" fill="none" stroke="#fff" /></svg>
          </TrayButton>
          <TrayButton aria-label="Volume">
            <svg width="17" height="14" viewBox="0 0 17 14"><path d="M.5 4.500h3L7 1.500v11L3.500 9.500h-3ZM9 5c1 1 1 3 0 4M11.500 3c2 2 2 6 0 8M14 1c3 3 3 9 0 12" fill="none" stroke="#fff" /></svg>
          </TrayButton>
          <Clock>9:11 PM<br />7/29/2024</Clock>
          <TrayButton $wide aria-label="Notifications">
            <svg width="16" height="16" viewBox="0 0 16 16"><path d="M.5.500h15v12h-5L8 15l-2.500-2.500h-5Z" fill="none" stroke="#fff" /></svg>
          </TrayButton>
          <ShowDesktop aria-label="Show desktop" />
        </Tray>
      </Taskbar>
    </Screen>
  );
}
